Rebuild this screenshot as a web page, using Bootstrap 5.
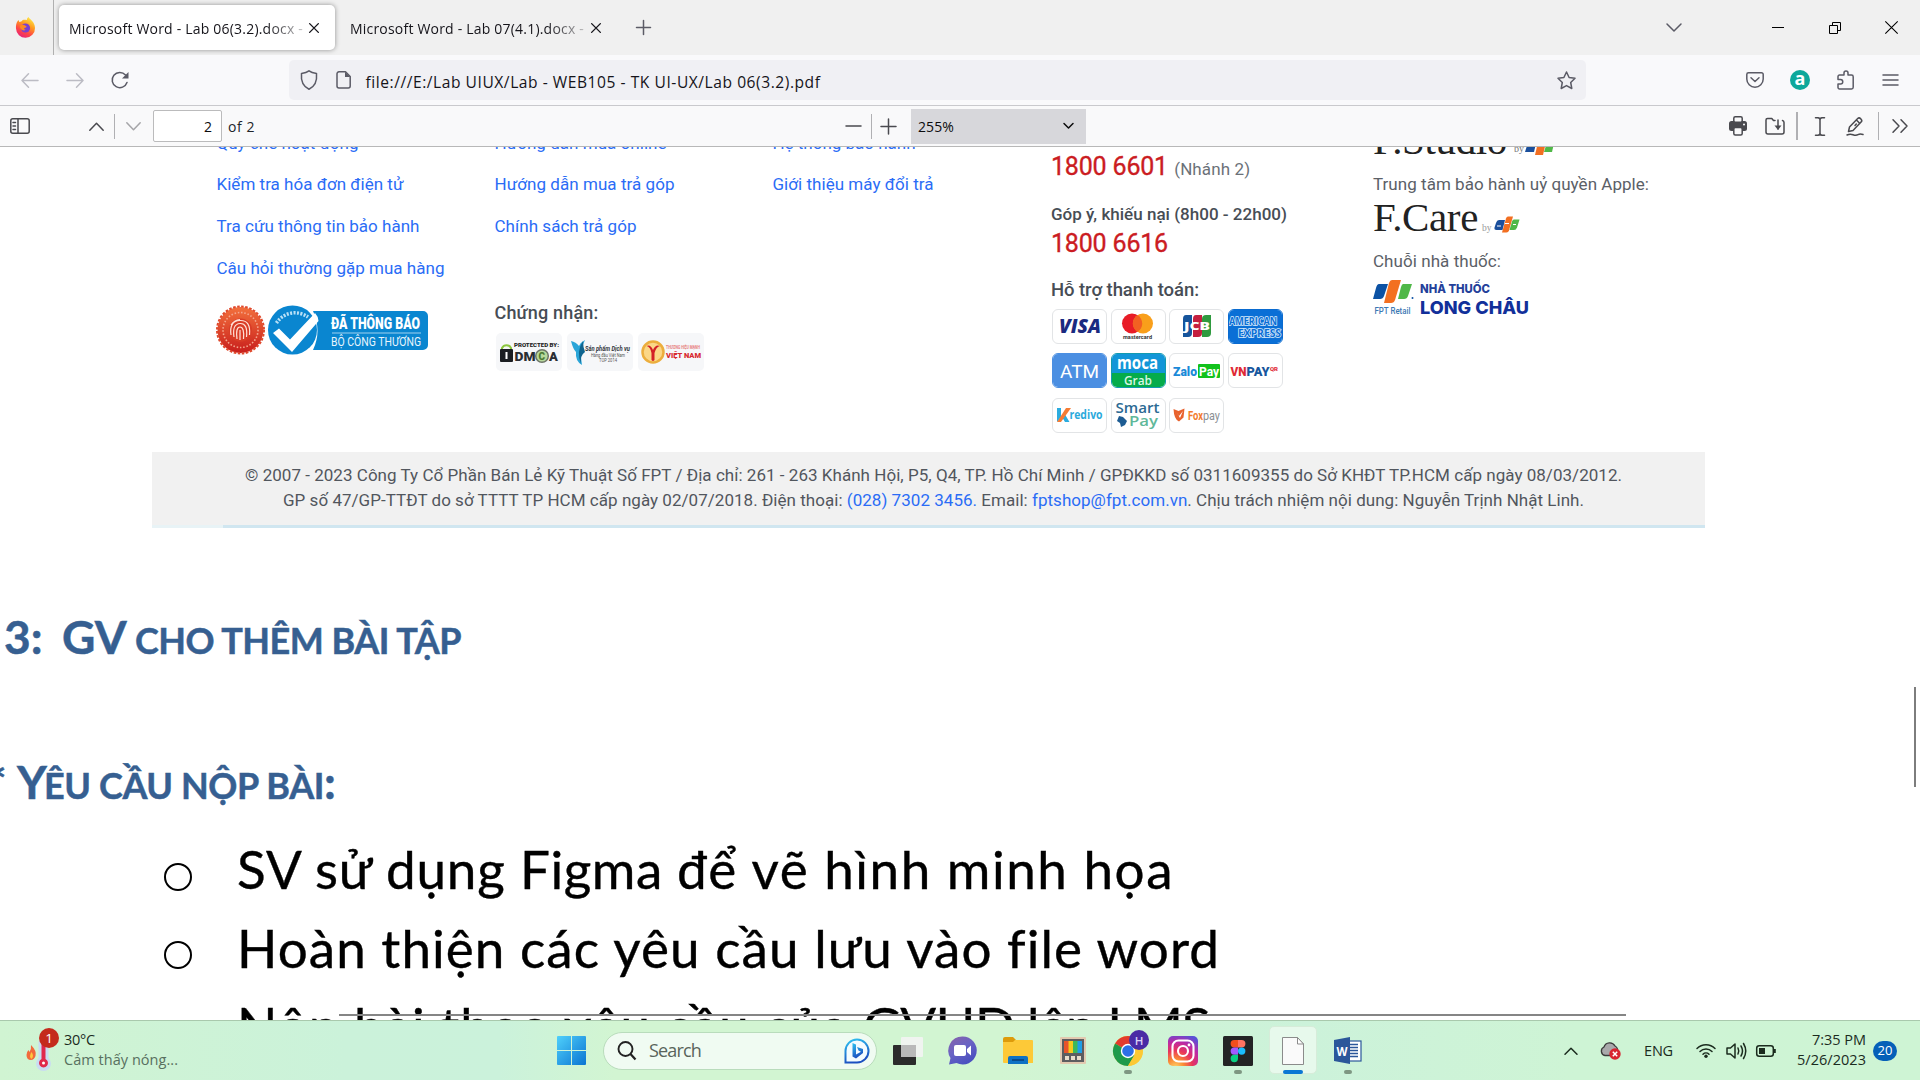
<!DOCTYPE html>
<html lang="vi">
<head>
<meta charset="utf-8">
<title>Lab 06(3.2).pdf</title>
<link href="https://cdn.jsdelivr.net/npm/bootstrap@5.3.0/dist/css/bootstrap.min.css" rel="stylesheet">
<style>
body{width:1920px;height:1080px;overflow:hidden;background:#fff;font-family:"Open Sans","Noto Sans",sans-serif;color:#15141a}
svg{display:block;flex:none;overflow:visible}
[data-w]{display:inline-block;white-space:nowrap;flex:none}
.ln{fill:none;stroke:currentColor;stroke-width:1.5;stroke-linecap:round;stroke-linejoin:round}
/* tabs */
.tabstrip{height:55px;background:#f0f0f0;font-size:14px}
.pin{width:54px;height:55px;border-right:1px solid #b0b0b0;padding:0 0 1px 14.5px}
.tab-on{width:276px;height:45px;margin-left:5px;background:#fff;border-radius:5px;box-shadow:0 0 5px rgba(0,0,0,.4);padding-left:10px}
.tab-off{width:276px;height:45px;padding-left:15px}
.fade-end{padding-top:1px;-webkit-mask-image:linear-gradient(90deg,#000 84%,rgba(0,0,0,.25));mask-image:linear-gradient(90deg,#000 84%,rgba(0,0,0,.25))}
.x-mark{margin-left:6px}
.tab-off .x-mark{margin-left:7px}
.plus{margin-left:25px}
.win{margin-right:22px}
.win .all{margin-right:90px}.win .mini{margin-right:45px}.win .rest{margin-right:44px}
/* address */
.addr{height:51px;background:#f9f9fb;border-bottom:1px solid #c9c9cd;padding-left:7.5px;color:#5b5b66}
.cell45{width:45px}
.url{width:1297px;height:40px;margin:0 146.5px;background:#f0f0f4;border-radius:5px;padding:0 10px 0 11px;font-size:15.6px}
.url .u{color:#15141a;margin-left:14.5px;padding-top:5px}
.doc-ic{margin-left:18px}
.ext{width:20px;height:20px;background:#0da89b;color:#fff;font:bold 18px/17px "Open Sans",sans-serif;text-align:center}
/* pdf toolbar */
.pdfbar{height:41px;background:#f9f9fa;border-bottom:1px solid #b8b8b8;color:#4a4a4f;font-size:14px}
.ga{width:836px}.c40{width:40px}.c37{width:37px}.c36{width:36px}.c35{width:35px}.c33{width:33px}
.up{margin-left:38px}
.sp{width:1px;height:25px;background:#b0b0b3}
.sp2{width:2px;height:28px;background:#b0b0b3;margin:0 4.5px 0 2.5px}
.sp3{height:28px;margin-left:6px}
.pg{width:69px;height:32px;border:1px solid #bbbbbc;border-radius:2px;background:#fff;margin:0 6px 0 2px;padding-right:9px;color:#0c0c0d}
.zm{width:175px;height:35px;background:#d7d7db;margin:0 0 0 6px;padding:0 12px 0 7px;color:#0c0c0d}
.more{width:41px;padding-left:1px}
/* document */
.docview{height:873px}
.shot{width:1553px;height:305px;margin-left:152px;padding-left:64.5px;font-family:Roboto,sans-serif;font-size:17px;color:#5b6067}
.k1,.k2{width:278px}.k3{width:278.5px}.k4{width:322px}
.lk{line-height:41.6px;height:41.6px;color:#2a6cf6}
.lks{margin-top:-24.2px}
.seals{margin:15.4px 0 0 -1px}
.hd{font-weight:500;color:#474d55;height:24px;line-height:24px}
.cn{font-size:18px;margin-top:53.4px}
.cert{width:66px;height:38px;background:#f6f7f9;border-radius:5px;margin-right:4.8px}
.certs{margin:8px 0 0 1.5px}
.tel{font-size:25px;line-height:24px;height:24px;color:#cb1c22;-webkit-text-stroke:.35px #cb1c22}
.nh{font-size:17px;color:#6b7178;-webkit-text-stroke:0}
.t1{margin-top:8px}.t2{margin-top:23px;font-size:17px}.t3{margin-top:5.5px}.t4{margin-top:22px;font-size:18.5px}
.pays{margin:7px 0 0 1px;display:grid;grid-template-columns:repeat(4,55px);column-gap:3.6px;row-gap:9.7px}
.pay{width:55px;height:35px;border:1.5px solid #e2e4e6;border-radius:6px;overflow:hidden;background:#fff}
.pay svg{margin:-1.5px}
.p-ax{border-color:#0a6bd0}.p-atm{border-color:#4b8fe2}.p-moca{border-color:#129ab0}
.serif{font-family:"Liberation Serif",serif;font-size:41px;line-height:32px;height:32px;color:#222}
.s1{margin-top:-23px}.s2{margin-top:16px;height:24px;line-height:24px}.s3{margin-top:5px}.s4{margin-top:15.5px;height:24px;line-height:24px}.s5{margin-top:7px}
.byfpt{margin-left:4px}
.legal{width:1553px;height:76px;margin-left:152px;background:#f1f1f1;font-family:Roboto,sans-serif;font-size:17px;line-height:25px;color:#51565d;padding-top:11px;text-align:center}
.legal p{margin:0;padding-left:10px}
.legal i{font-style:normal;color:#2a6cf6}
.blueline{height:3px;background:linear-gradient(90deg,#e8f3f6 71px,#d0e6f0 71px);margin-top:12px}
.word{font-family:Lato,"Open Sans",sans-serif}
.wh{color:#365f91;font-weight:700;font-size:46px;line-height:60px;height:60px;margin:0;white-space:nowrap;-webkit-text-stroke:.5px #365f91}
.wh .sm{font-size:36px}
.h-a{margin-top:79px;padding-left:4px}
.h-b{margin-top:85px;margin-left:-13px}
.ul-o{margin:18px 0 0 164px;padding:0;list-style:none;font-size:53px;color:#000;-webkit-text-stroke:.4px #000}
.ul-o li{height:78.5px;line-height:78.5px}
.ring{width:28px;height:28px;border:2.2px solid #000;border-radius:50%;margin:15px 45px 0 0}
.rule{left:339px;top:867px;width:1287px;height:2px;background:#858585}
.thumb{left:1914px;top:540px;width:2px;height:100px;background:#7d7d7d}
/* taskbar */
.task{height:60px;border-top:1px solid #a9c9ad;background:linear-gradient(90deg,#d0f4d2 0,#cbf2da 18%,#cbf2db 26%,#d2f5d2 32%,#d2f5d2 52%,#ccf2da 68%,#cef4d5 82%,#cef4d4 100%);font-size:14.5px;color:#1b2b1e}
.wx{width:557px;padding-left:23px}
.wx .tx{line-height:20px;margin-left:4px;padding-bottom:2px}
.wx .g{color:#587060}
.pill{width:274px;height:38px;margin:0 3px 0 17px;background:#f0fbf2;border:1px solid #b9dcbc;border-radius:19px;padding:0 6px 0 13px;font-size:18px;color:#59645b}
.pill .q{margin-left:12px}
.tc{width:55px;height:59px;position:relative}
.tc.run::after,.tc.act::after{content:"";position:absolute;left:23.5px;top:49px;width:8px;height:4px;border-radius:2px;background:#7e9782}
.tc.act::after{left:17.5px;width:20px;background:#0a78d4}
.tc.act::before{content:"";position:absolute;left:3.5px;top:5px;width:48px;height:48px;border-radius:5px;background:#e7f9ec;border:1px solid #d6ecd9}
.tc svg{position:relative}
.tray{margin-right:23px}
.clock{line-height:20px;text-align:right;width:75px;margin-right:7px;padding-bottom:2px}
.cnt{width:24px;height:20px;border-radius:10px;background:#0560b8;color:#fff;font-size:13px;line-height:19px;text-align:center}
.eng{margin:0 23px 0 23px}
.cl{margin-left:22px}
.spk{margin:0 9px 0 10px}.bat{margin-right:15px}
</style>
<script src="https://cdn.jsdelivr.net/npm/bootstrap@5.3.0/dist/js/bootstrap.bundle.min.js"></script>
</head>
<body class="d-flex flex-column">

<header class="tabstrip d-flex align-items-center flex-shrink-0">
  <div class="pin d-flex align-items-center">
    <svg width="21" height="21" viewBox="0 0 21 21"><defs><linearGradient id="ff" x1=".8" y1="0" x2=".3" y2="1"><stop offset="0" stop-color="#fff04a"/><stop offset=".4" stop-color="#ff9a1f"/><stop offset=".7" stop-color="#ff4a45"/><stop offset="1" stop-color="#e8207a"/></linearGradient></defs><path d="M2 5l1.500-2 .8 2 2-.4C8 2 10 3 12 3c-.3-1 .3-2 1.500-3 1 2.500 6.500 4.500 6.500 11a9.500 9.500 0 0 1-19 .5C.8 9 1.200 7 2 5z" fill="url(#ff)"/><circle cx="10.500" cy="11" r="4.600" fill="#7a3fd0"/><path d="M5 9c2-2 4-1 5.500-.3C12 9 12 10.500 10 10.800c-1.500.3-1 2 .8 2-2.800 2-6-.8-5.800-3.800z" fill="#ff8a22"/></svg>
  </div>
  <div class="tab-on d-flex align-items-center"><span class="fade-end" data-w="234">Microsoft Word - Lab 06(3.2).docx -</span>
    <svg class="x-mark" width="10" height="10" viewBox="0 0 11 11"><path d="M.7.7l9.600 9.600M10.300.7L.7 10.300" class="ln"/></svg></div>
  <div class="tab-off d-flex align-items-center"><span class="fade-end" data-w="234">Microsoft Word - Lab 07(4.1).docx -</span>
    <svg class="x-mark" width="10" height="10" viewBox="0 0 11 11"><path d="M.7.7l9.600 9.600M10.300.7L.7 10.300" class="ln"/></svg></div>
  <svg class="plus" width="15" height="15" viewBox="0 0 15 15" color="#5b5b66"><path d="M7.500.5v14M.5 7.500h14" class="ln"/></svg>
  <div class="win d-flex align-items-center ms-auto">
    <svg class="all" width="16" height="9" viewBox="0 0 16 9" color="#5b5b66"><path d="M1 1l7 7 7-7" class="ln"/></svg>
    <svg class="mini" width="12" height="12" viewBox="0 0 12 12"><path d="M0 5.500h12" stroke="#000"/></svg>
    <svg class="rest" width="12" height="12" viewBox="0 0 12 12"><path d="M.5 3.500h8v8h-8zM3.500 3V.5h8v8H9" fill="none" stroke="#000"/></svg>
    <svg width="13" height="13" viewBox="0 0 13 13"><path d="M.3.3l12.400 12.400M12.700.3L.3 12.700" stroke="#000" stroke-width="1.100"/></svg>
  </div>
</header>

<nav class="addr d-flex align-items-center flex-shrink-0">
  <div class="cell45 d-flex justify-content-center"><svg width="18" height="15" viewBox="0 0 18 15" color="#bcbcc4"><path d="M17 7.500H1M7.500.8L1 7.500l6.500 6.700" class="ln"/></svg></div>
  <div class="cell45 d-flex justify-content-center"><svg width="18" height="15" viewBox="0 0 18 15" color="#bcbcc4"><path d="M1 7.500h16M10.500.8l6.500 6.700-6.500 6.700" class="ln"/></svg></div>
  <div class="cell45 d-flex justify-content-center"><svg width="18" height="18" viewBox="0 0 18 18"><path d="M16 11.500A7.600 7.600 0 1 1 14.500 4" class="ln" stroke-width="1.700"/><path d="M17.500 1v6.500H11z" fill="currentColor"/></svg></div>
  <div class="url d-flex align-items-center">
    <svg width="18" height="20" viewBox="0 0 18 20"><path d="M9 .8c2 1.600 4.500 2.300 7.500 2.600.8 8-1.500 13-7.500 15.800C3 16.400.7 11.400 1.500 3.400 4.500 3.100 7 2.400 9 .8z" class="ln"/></svg>
    <svg class="doc-ic" width="15" height="18" viewBox="0 0 15 18"><path d="M3 .8h6.500l4.700 4.700V15a2 2 0 0 1-2 2H3a2 2 0 0 1-2-2V3A2 2 0 0 1 3 .8z" class="ln"/><path d="M9 .8V6h5.200z" fill="currentColor"/></svg>
    <span class="u" data-w="455">file:///E:/Lab UIUX/Lab - WEB105 - TK UI-UX/Lab 06(3.2).pdf</span>
    <svg class="ms-auto" width="19" height="19" viewBox="0 0 19 19"><path d="M9.500 1l2.600 5.500 5.900.8-4.300 4.200 1.100 6-5.300-2.900-5.300 2.900 1.100-6L1 7.300l5.900-.8z" class="ln"/></svg>
  </div>
  <div class="cell45 d-flex justify-content-center"><svg width="18" height="16" viewBox="0 0 18 16"><path d="M2.500.8h13a1.700 1.700 0 0 1 1.700 1.700V7a8.200 8.200 0 0 1-16.400 0V2.500A1.700 1.700 0 0 1 2.500.8zM5 5.800l4 3.700 4-3.700" class="ln"/></svg></div>
  <div class="cell45 d-flex justify-content-center"><div class="ext rounded-circle">a</div></div>
  <div class="cell45 d-flex justify-content-center"><svg width="16" height="20" viewBox="0 0 16 20"><path d="M7 5V3a2 2 0 0 1 4 0v2h3.500a1.700 1.700 0 0 1 1.700 1.700v10.600a1.700 1.700 0 0 1-1.700 1.700h-12A1.500 1.500 0 0 1 1 17.500V14h2.500a2 2 0 0 0 0-4.500H1V6.500A1.500 1.500 0 0 1 2.500 5z" class="ln"/></svg></div>
  <div class="cell45 d-flex justify-content-center"><svg width="15" height="12" viewBox="0 0 15 12"><path d="M0 1h15M0 6h15M0 11h15" class="ln"/></svg></div>
</nav>

<div class="pdfbar d-flex align-items-center flex-shrink-0">
  <div class="ga d-flex align-items-center">
    <div class="c40 d-flex justify-content-center"><svg width="20" height="16" viewBox="0 0 20 16"><rect x=".8" y=".8" width="18.400" height="14.400" rx="2" class="ln"/><path d="M8 1v14M3 4.500h2.500M3 8h2.500M3 11.500h2.500" class="ln"/></svg></div>
    <div class="c36 up d-flex justify-content-center"><svg width="15" height="9" viewBox="0 0 15 9"><path d="M.8 8.200l6.700-7 6.700 7" class="ln"/></svg></div>
    <div class="sp"></div>
    <div class="c36 d-flex justify-content-center"><svg width="15" height="9" viewBox="0 0 15 9" color="#a5a5a8"><path d="M.8.8l6.700 7 6.700-7" class="ln"/></svg></div>
    <div class="pg d-flex align-items-center justify-content-end">2</div><span data-w="27" class="text-dark">of 2</span>
  </div>
  <div class="c35 d-flex justify-content-center"><svg width="15" height="2" viewBox="0 0 15 2"><path d="M0 1h15" class="ln"/></svg></div>
  <div class="sp"></div>
  <div class="c33 d-flex justify-content-center"><svg width="15" height="15" viewBox="0 0 15 15"><path d="M7.500 0v15M0 7.500h15" class="ln"/></svg></div>
  <div class="zm d-flex align-items-center justify-content-between"><span data-w="36">255%</span><svg width="11" height="6" viewBox="0 0 11 6"><path d="M1 .5l4.500 4.500L10 .5" class="ln"/></svg></div>
  <div class="ms-auto d-flex align-items-center">
    <div class="c37 d-flex justify-content-center"><svg width="18" height="20" viewBox="0 0 18 20"><rect x="0" y="5" width="18" height="10" rx="2.500" fill="currentColor"/><rect x="4.800" y=".8" width="8.400" height="5.500" rx="1.500" fill="#f9f9fa" stroke="currentColor" stroke-width="1.500"/><rect x="4.800" y="11.500" width="8.400" height="7.500" rx="1.500" fill="#f9f9fa" stroke="currentColor" stroke-width="1.500"/><circle cx="15" cy="8.500" r="1" fill="#fff"/></svg></div>
    <div class="c37 d-flex justify-content-center"><svg width="20" height="18" viewBox="0 0 20 18"><path d="M8.500 3.500L6.800 1.500H2.500A1.500 1.500 0 0 0 1 3v12a2 2 0 0 0 2 2h14a2 2 0 0 0 2-2V5.500a2 2 0 0 0-1.500-2M10 3.500h-1.500M13 3v9" class="ln"/><path d="M9.500 8.500h7L13 13z" fill="currentColor"/></svg></div>
    <div class="sp2"></div>
    <div class="c35 d-flex justify-content-center"><svg width="10" height="19" viewBox="0 0 10 19"><path d="M.5.8h2.500q2 .2 2 2 0-1.800 2-2h2.500M.5 18.200h2.500q2-.2 2-2 0 1.800 2 2h2.500M5 2.500v14" class="ln"/></svg></div>
    <div class="c35 d-flex justify-content-center"><svg width="18" height="19" viewBox="0 0 18 19"><path d="M2.500 14.500l1-4.500 8.200-8.400a2 2 0 0 1 2.800 0l.6.600a2 2 0 0 1 0 2.800L7 13.500zM10.500 3l3.300 3.400M9 8.500l1.300-1.400M1 18q3-1.500 6-.3t5 0 5-.2" class="ln"/></svg></div>
    <div class="sp sp3"></div>
    <div class="more d-flex justify-content-center"><svg width="16" height="14" viewBox="0 0 16 14"><path d="M1 .8L7 7l-6 6.200M9 .8L15 7l-6 6.200" class="ln"/></svg></div>
  </div>
</div>

<main class="docview position-relative overflow-hidden flex-shrink-0">
  <section class="shot d-flex align-items-start">
    <div class="k1">
      <div class="lks">
        <div class="lk"><span data-w="142">Quy chế hoạt động</span></div>
        <div class="lk"><span data-w="187">Kiểm tra hóa đơn điện tử</span></div>
        <div class="lk"><span data-w="203">Tra cứu thông tin bảo hành</span></div>
        <div class="lk"><span data-w="228">Câu hỏi thường gặp mua hàng</span></div>
      </div>
      <div class="seals"><svg width="212" height="50" viewBox="0 0 212 50">
        <defs><linearGradient id="rd" x1="0" y1="0" x2="0" y2="1"><stop offset="0" stop-color="#f2703c"/><stop offset="1" stop-color="#c81e1c"/></linearGradient></defs>
        <circle cx="24.500" cy="25" r="23" fill="url(#rd)"/><circle cx="24.500" cy="25" r="23.500" fill="none" stroke="#e0492c" stroke-width="2" stroke-dasharray="2.600 1.500"/>
        <circle cx="24.500" cy="25" r="17.500" fill="none" stroke="#f4a68d" stroke-width="1.600" stroke-dasharray="1.500 1.800"/>
        <circle cx="24.500" cy="25" r="11.500" fill="#d93c26"/>
        <g fill="none" stroke="#ffe0d6" stroke-width="1.200"><path d="M15 30q-2-14 9-14.500T33.500 30M18 32q-2-13 6-13.500T30.500 32M21 34q-1.500-12 3-12t3.500 12M24 25v10M15 20q3-5 9-5.500"/></g>
        <path d="M97 6h110a5 5 0 0 1 5 5v29a5 5 0 0 1-5 5H97q9-19 0-39z" fill="#0a86d0"/>
        <circle cx="76.500" cy="25" r="24.500" fill="#0a86d0"/>
        <path d="M60.500 18A22 22 0 0 1 92 12" fill="none" stroke="#b9e0f6" stroke-width="3.500" stroke-dasharray="2 1.400"/>
        <path d="M57 28l6-4.500 11 11L99 8q3 3 3.500 8L76 47z" fill="#fff"/>
        <text x="115" y="24" font-family="Roboto,sans-serif" font-weight="900" font-size="17" fill="#fff" textLength="89" lengthAdjust="spacingAndGlyphs">ĐÃ THÔNG BÁO</text>
        <path d="M116 28h89" stroke="#9fd2f0"/><text x="115" y="41" font-family="Roboto,sans-serif" font-size="12" fill="#e8f5fc" textLength="90" lengthAdjust="spacingAndGlyphs">BỘ CÔNG THƯƠNG</text>
      </svg></div>
    </div>
    <div class="k2">
      <div class="lks">
        <div class="lk"><span data-w="172">Hướng dẫn mua online</span></div>
        <div class="lk"><span data-w="180">Hướng dẫn mua trả góp</span></div>
        <div class="lk"><span data-w="142">Chính sách trả góp</span></div>
      </div>
      <div class="hd cn"><span data-w="104">Chứng nhận:</span></div>
      <div class="certs d-flex">
        <div class="cert"><svg width="66" height="38" viewBox="0 0 66 38" font-family="Roboto,sans-serif"><path d="M6 17v-2a5 5 0 0 1 9 0v2" fill="none" stroke="#8cc63f" stroke-width="2"/><rect x="4" y="16" width="13" height="13" rx="1" fill="#1b1e22"/><rect x="9.500" y="19" width="2" height="7" fill="#fff"/><text x="18" y="13.500" font-weight="900" font-size="5.500" fill="#222" textLength="45" lengthAdjust="spacingAndGlyphs">PROTECTED BY:</text><text x="18.500" y="28" font-weight="900" font-size="13" fill="#2a2d32" textLength="21" lengthAdjust="spacingAndGlyphs">DM</text><circle cx="46" cy="23" r="6.300" fill="#b7d99b" stroke="#6d7468" stroke-width="1.500"/><text x="42.500" y="26.500" font-weight="900" font-size="10" fill="#4e7a34">C</text><text x="53" y="28" font-weight="900" font-size="13" fill="#2a2d32">A</text></svg></div>
        <div class="cert"><svg width="66" height="38" viewBox="0 0 66 38" font-family="Roboto,sans-serif"><path d="M4 8q5 1 8 5 2-4 6-6-6 11-3 25-7-4-6-13Q6 16 4 8z" fill="#2aa5d8"/><path d="M16 8q-7 10-2 23-1-9 4-12-2-5-2-11z" fill="#10658f"/><text x="18" y="18" font-size="6.500" font-weight="700" font-style="italic" fill="#30363c" textLength="45" lengthAdjust="spacingAndGlyphs">Sản phẩm Dịch vụ</text><text x="24" y="23.500" font-size="4.500" fill="#555" textLength="34" lengthAdjust="spacingAndGlyphs">Hàng đầu Việt Nam</text><text x="32" y="28.500" font-size="4.500" fill="#555" textLength="18" lengthAdjust="spacingAndGlyphs">TOP 2014</text></svg></div>
        <div class="cert"><svg width="66" height="38" viewBox="0 0 66 38" font-family="Roboto,sans-serif"><circle cx="15" cy="19" r="10.500" fill="#fbd787" stroke="#ecae3d" stroke-width="2.500"/><path d="M8.500 13q4-2 6.500 4 2.500-6 7-4-4 1-5.500 7v7q-1.500 2-3 0v-7q-1-6-5-7z" fill="#d32027"/><text x="28" y="16" font-size="4.500" font-weight="700" fill="#e77c7c" textLength="34" lengthAdjust="spacingAndGlyphs">THƯƠNG HIỆU MẠNH</text><text x="28" y="24.500" font-size="8" font-weight="900" fill="#d82a30" textLength="35" lengthAdjust="spacingAndGlyphs">VIỆT NAM</text></svg></div>
      </div>
    </div>
    <div class="k3"><div class="lks">
      <div class="lk"><span data-w="143">Hệ thống bảo hành</span></div>
      <div class="lk"><span data-w="161">Giới thiệu máy đổi trả</span></div></div>
    </div>
    <div class="k4">
      <div class="t1 tel"><span data-w="117">1800 6601</span> <span class="nh" data-w="76">(Nhánh 2)</span></div>
      <div class="hd t2"><span data-w="236">Góp ý, khiếu nại (8h00 - 22h00)</span></div>
      <div class="t3 tel"><span data-w="117">1800 6616</span></div>
      <div class="hd t4"><span data-w="148">Hỗ trợ thanh toán:</span></div>
      <div class="pays">
        <div class="pay"><svg width="55" height="35"><text x="7" y="25" font-family="Open Sans,sans-serif" font-weight="800" font-style="italic" font-size="20" fill="#1a2a80" textLength="42" lengthAdjust="spacingAndGlyphs">VISA</text></svg></div>
        <div class="pay"><svg width="55" height="35"><circle cx="22" cy="15.500" r="10" fill="#e81c27"/><circle cx="33" cy="15.500" r="10" fill="#f99f1b"/><path d="M27.500 7a10 10 0 0 1 0 17 10 10 0 0 1 0-17z" fill="#f26122"/><text x="13" y="30.500" font-family="Roboto" font-weight="700" font-size="5.500" fill="#333" textLength="29">mastercard</text></svg></div>
        <div class="pay"><svg width="55" height="35"><path d="M17 7h6v18q0 4-4 4h-5V11q0-4 3-4z" fill="#15549b"/><path d="M27 7h6v18q0 4-4 4h-5V11q0-4 3-4z" fill="#c41f3f"/><path d="M37 7h5v18q0 4-4 4h-5V11q0-4 4-4z" fill="#2f9a3f"/><text x="15" y="22" font-family="Open Sans" font-weight="800" font-size="10" fill="#fff" textLength="26" lengthAdjust="spacingAndGlyphs">JCB</text></svg></div>
        <div class="pay p-ax"><svg width="55" height="35"><rect width="55" height="35" fill="#0a6fd6"/><g font-family="Open Sans" font-weight="700" font-size="10" fill="#0a6fd6" stroke="#d9ebfb" stroke-width="1.500" paint-order="stroke"><text x="2" y="16.500" textLength="48" lengthAdjust="spacingAndGlyphs">AMERICAN</text><text x="11" y="28.500" textLength="43" lengthAdjust="spacingAndGlyphs">EXPRESS</text></g></svg></div>
        <div class="pay p-atm"><svg width="55" height="35"><rect width="55" height="35" fill="#4b8fe2"/><text x="8" y="25" font-family="Roboto" font-size="19" fill="#fff" textLength="39" lengthAdjust="spacingAndGlyphs">ATM</text></svg></div>
        <div class="pay p-moca"><svg width="55" height="35"><rect width="55" height="20.500" fill="#1296d8"/><rect y="20" width="55" height="15" fill="#05ac4b"/><text x="7" y="15.500" font-family="Open Sans" font-weight="700" font-size="17" fill="#fff" textLength="41" lengthAdjust="spacingAndGlyphs">moca</text><text x="14" y="32" font-family="Open Sans" font-weight="600" font-size="12.500" fill="#d9f6e4" textLength="28" lengthAdjust="spacingAndGlyphs">Grab</text></svg></div>
        <div class="pay"><svg width="55" height="35"><rect x="29" y="11" width="22" height="14" rx="1" fill="#12c21c"/><g font-family="Roboto" font-weight="900" font-size="13"><text x="4" y="23" fill="#1a8ad8" textLength="24" lengthAdjust="spacingAndGlyphs">Zalo</text><text x="30" y="23" fill="#fff" font-weight="700" textLength="20" lengthAdjust="spacingAndGlyphs">Pay</text></g></svg></div>
        <div class="pay"><svg width="55" height="35" font-family="Roboto" font-weight="900" font-size="13"><text x="3.500" y="22.500" fill="#e02a35" textLength="16" lengthAdjust="spacingAndGlyphs">VN</text><text x="19.500" y="22.500" fill="#17569d" textLength="23" lengthAdjust="spacingAndGlyphs">PAY</text><text x="43" y="18" font-size="5" fill="#e02a35" textLength="8" lengthAdjust="spacingAndGlyphs">QR</text></svg></div>
        <div class="pay"><svg width="55" height="35"><path d="M10 20l3-2.500 4.500 7.500H13zM5 11h4v9l-4 5z" fill="#2bacdf"/><path d="M14 11h5L9 25H5z" fill="#f57c34"/><text x="17.500" y="21.500" font-family="Open Sans" font-weight="700" font-size="11.500" fill="#2baadc" textLength="33" lengthAdjust="spacingAndGlyphs">redivo</text></svg></div>
        <div class="pay"><svg width="55" height="35" font-family="Open Sans" font-weight="600"><text x="5.500" y="16" font-size="15" fill="#2c6a93" textLength="44" lengthAdjust="spacingAndGlyphs">Smart</text><text x="19" y="29" font-size="15" fill="#5fb89a" textLength="29" lengthAdjust="spacingAndGlyphs">Pay</text><path d="M9 19l4 1 4 4-2 4-4 2-1-4-3-2z" fill="#1d5c93"/></svg></div>
        <div class="pay"><svg width="55" height="35" font-family="Roboto" font-size="13"><path d="M4.500 12l5 2 6-2.500-1 9-4.500 4q-5-2-5.500-12.500z" fill="#e8622d"/><path d="M7 14l3 5 4-5-3 7z" fill="#fff"/><text x="19" y="22.500" font-weight="700" fill="#f37a2b" textLength="15" lengthAdjust="spacingAndGlyphs">Fox</text><text x="34" y="22.500" fill="#8b8f94" textLength="17" lengthAdjust="spacingAndGlyphs">pay</text></svg></div>
      </div>
    </div>
    <div>
      <div class="serif s1 d-flex"><span data-w="134">F.Studio</span><svg class="byfpt" width="42" height="32" viewBox="0 0 42 32"><text x="3" y="28" font-family="Liberation Serif" font-size="10" fill="#777">by</text><path d="M18 15h8l-3 13h-9z" fill="#1a4f9c"/><path d="M28 14h8l-4 17h-8z" fill="#f26f21"/><path d="M37 15h7l-3 13h-8z" fill="#50b848"/></svg></div>
      <div class="s2"><span data-w="276">Trung tâm bảo hành uỷ quyền Apple:</span></div>
      <div class="serif s3 d-flex"><span data-w="105">F.Care</span><svg class="byfpt" width="38" height="32" viewBox="0 0 38 32"><text x="0" y="30" font-family="Liberation Serif" font-size="9.500" fill="#999">by</text><g transform="translate(0 1.500)"><path d="M17 17.500h6l-2.500 10h-6q-2.500 0-2-2.500l1.500-4.500q.8-3 3-3z" fill="#1a4f9c"/><path d="M26 14h5l-4 14q-.6 2-2.500 2H20l4-14q.6-2 2-2z" fill="#f26f21"/><path d="M32 17h5.500l-2.500 8q-.8 2.500-3 2.500h-4.500l2.500-8.500q.6-2 2-2z" fill="#50b848"/><path d="M15 23.500h4M23 21h4M31 22h3" stroke="#fff" stroke-width="1"/></g></svg></div>
      <div class="s4"><span data-w="128">Chuỗi nhà thuốc:</span></div>
      <div class="s5"><svg width="158" height="36" viewBox="0 0 158 36"><path d="M6 4h9l-4 12q-1 3-4 3H0L3 8q1-4 3-4z" fill="#0c52a4"/><path d="M19 0h9l-6 20q-1 3-4 3h-7l5-20q1-3 3-3z" fill="#f37021"/><path d="M30 4h9l-4 12q-1 3-4 3h-6l3-12q1-3 2-3z" fill="#50b848"/><circle cx="39.500" cy="18" r="1" fill="#0c52a4"/>
        <text x="1.500" y="33.500" font-family="Roboto" font-weight="500" font-size="8.500" fill="#3c78b4" textLength="36" lengthAdjust="spacingAndGlyphs">FPT Retail</text>
        <text x="47" y="13" font-family="Inter,Roboto" font-weight="800" font-size="12" fill="#23409a" textLength="70" lengthAdjust="spacingAndGlyphs">NHÀ THUỐC</text>
        <text x="47" y="34" font-family="Inter,Roboto" font-weight="800" font-size="17.500" fill="#12309a" textLength="109" lengthAdjust="spacingAndGlyphs">LONG CHÂU</text></svg></div>
    </div>
  </section>
  <section class="legal">
    <p><span data-w="1377">© 2007 - 2023 Công Ty Cổ Phần Bán Lẻ Kỹ Thuật Số FPT / Địa chỉ: 261 - 263 Khánh Hội, P5, Q4, TP. Hồ Chí Minh / GPĐKKD số 0311609355 do Sở KHĐT TP.HCM cấp ngày 08/03/2012.</span></p>
    <p><span data-w="1301">GP số 47/GP-TTĐT do sở TTTT TP HCM cấp ngày 02/07/2018. Điện thoại: <i>(028) 7302 3456.</i> Email: <i>fptshop@fpt.com.vn</i>. Chịu trách nhiệm nội dung: Nguyễn Trịnh Nhật Linh.</span></p>
    <div class="blueline"></div>
  </section>
  <section class="word">
    <h1 class="wh h-a d-flex align-items-baseline"><span data-w="58">3:</span><span data-w="73">GV</span><span class="sm" data-w="326">CHO THÊM BÀI TẬP</span></h1>
    <h2 class="wh h-b d-flex align-items-baseline"><span data-w="30">*</span><span data-w="27">Y</span><span class="sm" data-w="280">ÊU CẦU NỘP BÀI</span><span>:</span></h2>
    <ul class="ul-o">
      <li class="d-flex align-items-center"><span class="ring"></span><span data-w="283">SV sử dụng </span><span data-w="157">Figma </span><span data-w="497">để vẽ hình minh họa</span></li>
      <li class="d-flex align-items-center"><span class="ring"></span><span data-w="982">Hoàn thiện các yêu cầu lưu vào file word</span></li>
      <li class="d-flex align-items-center"><span class="ring"></span><span data-w="626">Nộp bài theo yêu cầu của </span><span data-w="347">GVHD lên LMS</span></li>
    </ul>
  </section>
  <div class="rule position-absolute"></div>
  <div class="thumb position-absolute"></div>
</main>

<footer class="task d-flex align-items-center flex-shrink-0">
  <div class="wx d-flex align-items-center">
    <svg width="37" height="44" viewBox="0 0 37 44"><path d="M8 16q6 6 4.500 11-1.500 4-4.500 4-4.500 0-4.500-5 0-3 2-5l1 2q2-3 1.500-7z" fill="#f26a3c"/><path d="M8.500 23q3 4 0 7-3-2 0-7z" fill="#ffc83d"/><path d="M15.500 14a5 5 0 0 1 10 0v15a7.500 7.500 0 1 1-10 0z" fill="#c9dcf2"/><path d="M18.500 14h4v16a4.500 4.500 0 1 1-4 0z" fill="#e0284c"/><circle cx="20.500" cy="34" r="1.500" fill="#fff"/><circle cx="26" cy="9" r="10" fill="#c42b1c"/><text x="26" y="14" font-size="13.500" fill="#fff" text-anchor="middle">1</text></svg>
    <div class="tx"><div><span data-w="31">30°C</span></div><div class="g"><span data-w="114">Cảm thấy nóng...</span></div></div>
  </div>
  <svg width="29" height="29" viewBox="0 0 29 29"><defs><linearGradient id="wn" x1="0" y1="0" x2="1" y2="1"><stop offset="0" stop-color="#4fd0fb"/><stop offset="1" stop-color="#0a74d2"/></linearGradient></defs><path d="M1 0h13v14H0V1q0-1 1-1zM15 0h13q1 0 1 1v13H15zM0 15h14v14H1q-1 0-1-1zM15 15h14v13q0 1-1 1H15z" fill="url(#wn)"/></svg>
  <div class="pill d-flex align-items-center">
    <svg width="20" height="20" viewBox="0 0 20 20"><circle cx="8.500" cy="8" r="7" fill="none" stroke="#222" stroke-width="1.900"/><path d="M13.500 13l5 5.500" stroke="#222" stroke-width="2.200"/></svg>
    <span class="q" data-w="52">Search</span>
    <svg class="ms-auto" width="26" height="26" viewBox="0 0 26 26"><defs><linearGradient id="bg" x1="0" y1="0" x2=".3" y2="1"><stop offset="0" stop-color="#2fc4f2"/><stop offset="1" stop-color="#1b4fc0"/></linearGradient></defs><path d="M1.500 24.500V13A11.500 11.500 0 1 1 13 24.500z" fill="#f4fcff" stroke="url(#bg)" stroke-width="2"/><path d="M8.500 5l3.500 1.500v10l5-2.800-2.500-1.300-1.500-3.500 6 2.200v4L12 20.500l-3.500-2z" fill="url(#bg)"/></svg>
  </div>
  <div class="tc d-flex align-items-center justify-content-center"><svg width="30" height="28" viewBox="0 0 30 28"><rect x="0" y="8" width="23" height="20" rx="1" fill="#2b2b2b"/><rect x="8" y="0" width="22" height="20" rx="1" fill="#f4f4f4" fill-opacity=".88"/><rect x="8" y="8" width="15" height="12" fill="#b9b9b9"/></svg></div>
  <div class="tc d-flex align-items-center justify-content-center"><svg width="29" height="29" viewBox="0 0 29 29"><defs><linearGradient id="ch" x1="0" y1="0" x2=".6" y2="1"><stop offset="0" stop-color="#8a62a8"/><stop offset=".5" stop-color="#6a63c4"/><stop offset="1" stop-color="#4a4fc0"/></linearGradient></defs><path d="M14.500.5a14 14 0 1 1-6 26.500L1 28.500 2.500 22A14 14 0 0 1 14.500.5z" fill="url(#ch)"/><rect x="6" y="9" width="12" height="11" rx="2" fill="#fff"/><path d="M19 13l4-3.500v10L19 16z" fill="#fff"/></svg></div>
  <div class="tc d-flex align-items-center justify-content-center"><svg width="30" height="27" viewBox="0 0 30 27"><path d="M0 2q0-2 2-2h8l3 3-3 4H0z" fill="#dd9b0b"/><path d="M0 5h10l2-2h17q1 0 1 1v22H1q-1 0-1-1z" fill="#fdc938"/><path d="M5 27v-6q0-2 2-2h16q2 0 2 2v6z" fill="#0f72c4"/><path d="M9 23h12" stroke="#0a3f7a" stroke-width="1.500"/></svg></div>
  <div class="tc d-flex align-items-center justify-content-center"><svg width="26" height="27" viewBox="0 0 26 27"><rect width="26" height="27" rx="1" fill="#e2c9b0"/><rect x="2" y="2" width="22" height="23" fill="#5d5d60"/><path d="M4 4h5v12H4z" fill="#e8532b"/><path d="M8.500 4h5v12h-5z" fill="#f6c91d"/><path d="M13 4h5v12h-5z" fill="#3cb85a"/><path d="M17.500 4H22v12h-4.500z" fill="#1f9ee8"/><path d="M5 19h4v4H5zM11 19h4v4h-4zM17 19h4v4h-4z" fill="#e8dccb"/></svg></div>
  <div class="tc run d-flex align-items-center justify-content-center"><svg width="30" height="30" viewBox="0 0 30 30"><circle cx="15" cy="15" r="15" fill="#fcc934"/><path d="M15 15L2 7.500a15 15 0 0 1 26 0z" fill="#e33b2e"/><path d="M15 15L2 7.500A15 15 0 0 0 15 30l6.500-11z" fill="#1e9a4b"/><path d="M15 8h13a15 15 0 0 1-13 22l6.500-11z" fill="#fcc934"/><circle cx="15" cy="15" r="7.200" fill="#fff"/><circle cx="15" cy="15" r="5.800" fill="#2c6fe6"/><circle cx="26" cy="4" r="10" fill="#4a2aa5"/><text x="26" y="8.500" font-size="11.500" font-weight="600" fill="#d9d0f5" text-anchor="middle">H</text></svg></div>
  <div class="tc d-flex align-items-center justify-content-center"><svg width="30" height="30" viewBox="0 0 30 30"><defs><radialGradient id="ig" cx=".25" cy="1.050" r="1.150"><stop offset="0" stop-color="#fed36a"/><stop offset=".25" stop-color="#fa8a35"/><stop offset=".5" stop-color="#e8355c"/><stop offset=".75" stop-color="#bb2aa6"/><stop offset="1" stop-color="#5a50d6"/></radialGradient></defs><rect width="30" height="30" rx="5" fill="url(#ig)"/><rect x="4.500" y="4.500" width="21" height="21" rx="6" fill="none" stroke="#fff" stroke-width="2.100"/><circle cx="15" cy="15" r="5" fill="none" stroke="#fff" stroke-width="2.100"/><circle cx="21" cy="9" r="1.400" fill="#fff"/></svg></div>
  <div class="tc run d-flex align-items-center justify-content-center"><svg width="30" height="30" viewBox="0 0 30 30"><rect width="30" height="30" rx="1.500" fill="#232325"/><path d="M15 4h-3.700a3.700 3.700 0 0 0 0 7.400H15z" fill="#f24e1e"/><path d="M15 4h3.700a3.700 3.700 0 0 1 0 7.400H15z" fill="#ff7262"/><path d="M15 11.400h-3.700a3.700 3.700 0 0 0 0 7.400H15z" fill="#a259ff"/><circle cx="18.700" cy="15.100" r="3.700" fill="#1abcfe"/><path d="M15 18.800h-3.700a3.700 3.700 0 1 0 3.700 3.700z" fill="#0acf83"/></svg></div>
  <div class="tc act d-flex align-items-center justify-content-center"><svg width="22" height="28" viewBox="0 0 22 28"><path d="M.5.500h15l6 6.500v20.500H.5z" fill="#fafafa" stroke="#8b8b8b"/><path d="M15.500.5V7h6z" fill="#fff" stroke="#8b8b8b"/></svg></div>
  <div class="tc run d-flex align-items-center justify-content-center"><svg width="28" height="27" viewBox="0 0 28 27"><rect x="14" y="4" width="13" height="20" fill="#fff" stroke="#2b579a" stroke-width="1.200"/><path d="M16 7.500h8M16 10.500h8M16 13.500h8M16 16.500h8M16 19.500h8" stroke="#2b579a" stroke-width="1.300"/><path d="M0 3l16-3v27L0 24z" fill="#2b579a"/><text x="2.500" y="18.500" font-size="12.500" font-weight="700" fill="#fff" textLength="11" lengthAdjust="spacingAndGlyphs">W</text></svg></div>
  <div class="tray d-flex align-items-center ms-auto">
    <svg width="14" height="8" viewBox="0 0 14 8"><path d="M1 7.200l6-6 6 6" class="ln"/></svg>
    <svg class="cl" width="21" height="18" viewBox="0 0 21 18"><path d="M5 13.500A4.500 4.500 0 0 1 4 5a6 6 0 0 1 11-1 5 5 0 0 1 2 7q-1 2.500-3 2.500z" fill="#a9a9ab" stroke="#3c3c3c" stroke-width="1.300"/><circle cx="15" cy="12" r="5.700" fill="#d8232f"/><path d="M12.800 9.800l4.400 4.400M17.200 9.800l-4.400 4.400" stroke="#fff" stroke-width="1.500"/></svg>
    <span class="eng" data-w="29">ENG</span>
    <svg width="20" height="15" viewBox="0 0 20 15"><path d="M1 5.500a12.500 12.500 0 0 1 18 0M4 8.500a8.500 8.500 0 0 1 12 0M7 11.200a4.300 4.300 0 0 1 6 0" class="ln" stroke-width="1.300"/><circle cx="10" cy="13.300" r="1.700" fill="currentColor"/></svg>
    <svg class="spk" width="21" height="18" viewBox="0 0 21 18"><path d="M1 6h3.500L9 2v14l-4.500-4H1zM12 6q1.500 3 0 6M15 4q3 5 0 10M17.500 1.500q4.500 7.500 0 15" class="ln" stroke-width="1.300"/></svg>
    <svg class="bat" width="20" height="12" viewBox="0 0 20 12"><rect x=".7" y=".7" width="16.600" height="10.600" rx="2.500" class="ln"/><rect x="3" y="3" width="6" height="6" fill="currentColor"/><path d="M18.800 4v4" stroke="currentColor" stroke-width="2"/></svg>
    <div class="clock"><div><span data-w="54">7:35 PM</span></div><div><span data-w="69">5/26/2023</span></div></div>
    <div class="cnt">20</div>
  </div>
</footer>

<script>
// Tracks each text run so that it fills its declared width.
document.querySelectorAll('[data-w]').forEach(function (el) {
  var want = +el.dataset.w, box = el.style;
  if (/ $/.test(el.textContent)) box.whiteSpace = 'pre';
  var range = document.createRange();
  range.selectNodeContents(el);
  var have = range.getBoundingClientRect().width, n = el.textContent.length;
  if (el.closest('.wh') && n < 3) { box.width = want + 'px'; return; }
  box.letterSpacing = ((want - have) / n) + 'px';
});
</script>
</body>
</html>
